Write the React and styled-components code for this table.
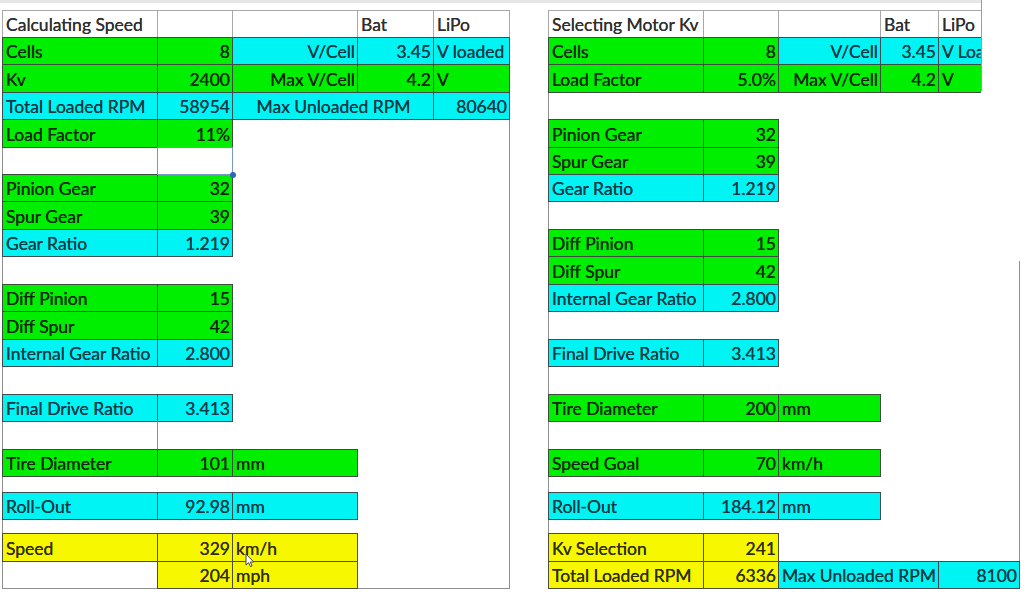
import React from "react";
import styled, { createGlobalStyle } from "styled-components";

const GlobalStyle = createGlobalStyle`
  html, body {
    margin: 0;
    padding: 0;
    background: #ffffff;
  }
  body {
    font-family: Lato, "Liberation Sans", sans-serif;
  }
`;

// spreadsheet row heights shared by both sheets
const ROWS = [27, 27, 28, 27, 28, 27, 27, 28, 27, 28, 27, 28, 27, 28, 27, 28, 27, 16, 27, 14, 28, 27];

const fills = {
  head: { bg: "#ffffff", fg: "#2e2e2e", line: "#a8a8a8" },
  green: { bg: "#00ef00", fg: "#0c280c", line: "#3d4d3d" },
  cyan: { bg: "#00f4f4", fg: "#0a3a46", line: "#3d4d52" },
  yellow: { bg: "#f7f700", fg: "#2e2e0a", line: "#4d4d3a" },
};

const Screen = styled.div`
  position: relative;
  width: 1024px;
  height: 592px;
  overflow: hidden;
  background: #ffffff;
`;

const TopStrip = styled.div`
  height: 3px;
  background: #e6e6e6;
`;

const Sheets = styled.div`
  display: flex;
  align-items: flex-start;
  gap: 38px;
  padding: 7px 0 0 2px;
`;

const Sheet = styled.div`
  display: grid;
  grid-template-columns: ${(p) => p.$cols};
  grid-template-rows: ${ROWS.map((h) => `${h}px`).join(" ")};
  padding: 0 1px 1px 0;
  box-shadow: inset 1px 0 #8e8e8e, inset -1px 0 #8e8e8e, inset 0 -1px #8e8e8e;
`;

const Cell = styled.div`
  grid-row: ${(p) => p.$row + 1};
  grid-column: ${(p) => p.$col + 1} / span ${(p) => p.$span || 1};
  margin: 0 -1px -1px 0;
  box-sizing: border-box;
  display: flex;
  align-items: center;
  justify-content: ${(p) =>
    p.$align === "right" ? "flex-end" : p.$align === "center" ? "center" : "flex-start"};
  padding: 1px 2px 0 3px;
  font-size: 17.5px;
  white-space: nowrap;
  overflow: hidden;
  text-shadow: 0 0 0.6px currentColor;
  color: ${(p) => fills[p.$fill].fg};
  background: ${(p) => fills[p.$fill].bg};
  border: 1px solid ${(p) => fills[p.$fill].line};
`;

const SelectedCell = styled.div`
  grid-row: ${(p) => p.$row + 1};
  grid-column: ${(p) => p.$col + 1};
  margin: 0 -1px -1px 0;
  position: relative;
  border: 1px solid #7499c9;

  &::after {
    content: "";
    position: absolute;
    right: -4px;
    bottom: -4px;
    width: 6px;
    height: 6px;
    border-radius: 50%;
    background: #2d68b8;
  }
`;

const RuleCell = styled.div`
  grid-row: ${(p) => p.$row + 1};
  grid-column: ${(p) => p.$col + 1};
  border-left: 1px solid #8e8e8e;
`;

const WindowEdge = styled.div`
  position: absolute;
  top: 0;
  right: 0;
  width: 43px;
  height: 261px;
  background: linear-gradient(#9c9c9c, #9c9c9c) left top / 1px 91px no-repeat, #ffffff;
`;

const Pointer = styled.svg`
  position: absolute;
  left: 245px;
  top: 553px;
`;

const H = "head";
const G = "green";
const C = "cyan";
const Y = "yellow";

const leftCells = [
  [0, 0, H, "Calculating Speed"], [0, 1, H, ""], [0, 2, H, ""], [0, 3, H, "Bat"], [0, 4, H, "LiPo"],
  [1, 0, G, "Cells"], [1, 1, G, "8", "right"], [1, 2, C, "V/Cell", "right"], [1, 3, C, "3.45", "right"], [1, 4, C, "V loaded"],
  [2, 0, G, "Kv"], [2, 1, G, "2400", "right"], [2, 2, G, "Max V/Cell", "right"], [2, 3, G, "4.2", "right"], [2, 4, G, "V"],
  [3, 0, C, "Total Loaded RPM"], [3, 1, C, "58954", "right"], [3, 2, C, "Max Unloaded RPM", "center", 2], [3, 4, C, "80640", "right"],
  [4, 0, G, "Load Factor"], [4, 1, G, "11%", "right"],
  [6, 0, G, "Pinion Gear"], [6, 1, G, "32", "right"],
  [7, 0, G, "Spur Gear"], [7, 1, G, "39", "right"],
  [8, 0, C, "Gear Ratio"], [8, 1, C, "1.219", "right"],
  [10, 0, G, "Diff Pinion"], [10, 1, G, "15", "right"],
  [11, 0, G, "Diff Spur"], [11, 1, G, "42", "right"],
  [12, 0, C, "Internal Gear Ratio"], [12, 1, C, "2.800", "right"],
  [14, 0, C, "Final Drive Ratio"], [14, 1, C, "3.413", "right"],
  [16, 0, G, "Tire Diameter"], [16, 1, G, "101", "right"], [16, 2, G, "mm"],
  [18, 0, C, "Roll-Out"], [18, 1, C, "92.98", "right"], [18, 2, C, "mm"],
  [20, 0, Y, "Speed"], [20, 1, Y, "329", "right"], [20, 2, Y, "km/h"],
  [21, 1, Y, "204", "right"], [21, 2, Y, "mph"],
];

const rightCells = [
  [0, 0, H, "Selecting Motor Kv"], [0, 1, H, ""], [0, 2, H, ""], [0, 3, H, "Bat"], [0, 4, H, "LiPo"],
  [1, 0, G, "Cells"], [1, 1, G, "8", "right"], [1, 2, C, "V/Cell", "right"], [1, 3, C, "3.45", "right"], [1, 4, C, "V Loaded"],
  [2, 0, G, "Load Factor"], [2, 1, G, "5.0%", "right"], [2, 2, G, "Max V/Cell", "right"], [2, 3, G, "4.2", "right"], [2, 4, G, "V"],
  [4, 0, G, "Pinion Gear"], [4, 1, G, "32", "right"],
  [5, 0, G, "Spur Gear"], [5, 1, G, "39", "right"],
  [6, 0, C, "Gear Ratio"], [6, 1, C, "1.219", "right"],
  [8, 0, G, "Diff Pinion"], [8, 1, G, "15", "right"],
  [9, 0, G, "Diff Spur"], [9, 1, G, "42", "right"],
  [10, 0, C, "Internal Gear Ratio"], [10, 1, C, "2.800", "right"],
  [12, 0, C, "Final Drive Ratio"], [12, 1, C, "3.413", "right"],
  [14, 0, G, "Tire Diameter"], [14, 1, G, "200", "right"], [14, 2, G, "mm"],
  [16, 0, G, "Speed Goal"], [16, 1, G, "70", "right"], [16, 2, G, "km/h"],
  [18, 0, C, "Roll-Out"], [18, 1, C, "184.12", "right"], [18, 2, C, "mm"],
  [20, 0, Y, "Kv Selection"], [20, 1, Y, "241", "right"],
  [21, 0, Y, "Total Loaded RPM"], [21, 1, Y, "6336", "right"], [21, 2, C, "Max Unloaded RPM", "center", 2], [21, 4, C, "8100", "right"],
];

function renderCells(cells) {
  return cells.map(([row, col, fill, text, align, span]) => (
    <Cell key={`${row}-${col}`} $row={row} $col={col} $fill={fill} $align={align} $span={span}>
      {text}
    </Cell>
  ));
}

export default function App() {
  return (
    <Screen>
      <GlobalStyle />
      <TopStrip />
      <Sheets>
        <Sheet $cols="155px 75px 125px 76px 76px">
          {renderCells(leftCells)}
          <SelectedCell $row={5} $col={1} />
          <RuleCell $row={15} $col={1} />
        </Sheet>
        <Sheet $cols="155px 75px 102px 58px 81px">{renderCells(rightCells)}</Sheet>
      </Sheets>
      <WindowEdge />
      <Pointer width="10" height="15" viewBox="0 0 10 15">
        <path d="M1 1 L1 12 L3.6 9.6 L5.4 13.6 L7 12.9 L5.3 9 L8.8 9 Z" fill="#ffffff" stroke="#444444" strokeWidth="1" />
      </Pointer>
    </Screen>
  );
}
